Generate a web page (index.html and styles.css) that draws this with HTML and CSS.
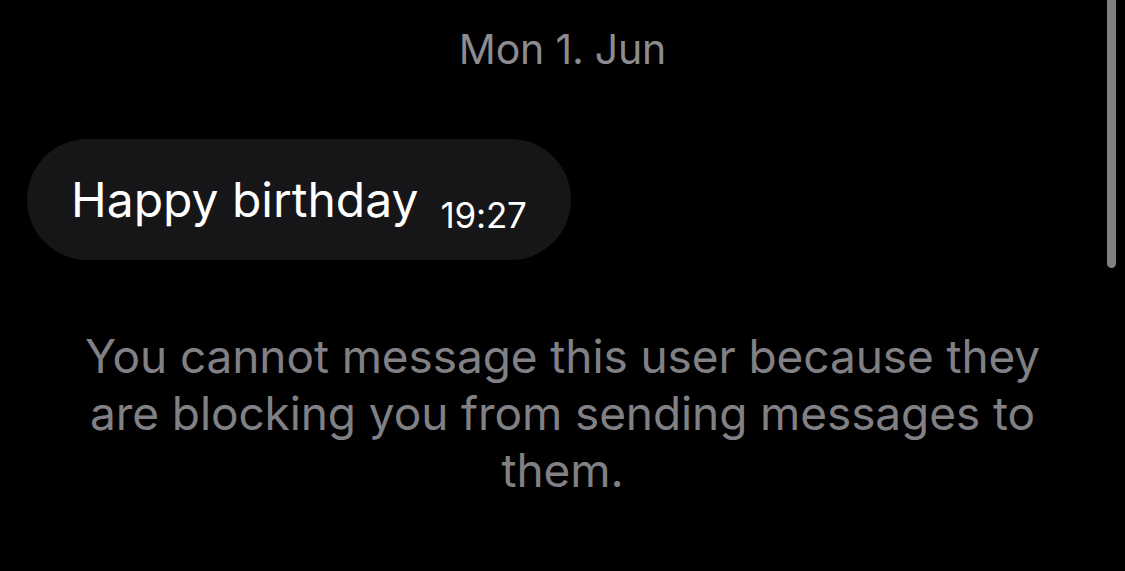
FILE: index.html
```html
<!DOCTYPE html>
<html lang="en">
<head>
  <meta charset="UTF-8">
  <meta name="viewport" content="width=device-width, initial-scale=1.0">
  <title>Chat</title>
  <link rel="stylesheet" href="styles.css">
</head>
<body>

  <div class="chat">
    <div class="date">Mon 1. Jun</div>

    <div class="row">
      <div class="bubble">
        <span class="text">Happy birthday</span>
        <span class="time">19:27</span>
      </div>
    </div>

    <p class="notice">You cannot message this user because they are blocking you from sending messages to them.</p>
  </div>

  <div class="scrollbar"></div>

</body>
</html>
```

FILE: styles.css
```css
body {
  background-color: #000;
  font-family: Inter, "Noto Sans", sans-serif;
  margin: 0;
  height: 571px;
  overflow: hidden;
}
.chat {
  display: flex;
  flex-direction: column;
  padding-top: 26px;
}
.date {
  text-align: center;
  color: #8b8b90;
  font-size: 41px;
  line-height: 46px;
  letter-spacing: -0.2px;
}
.row {
  display: flex;
  padding-left: 27px;
  margin-top: 67px;
}
.bubble {
  background-color: #161618;
  border-radius: 61px;
  height: 121px;
  padding: 34px 44px 0 44px;
  display: flex;
  align-items: baseline;
  gap: 22px;
  box-sizing: border-box;
}
.text {
  color: #fff;
  font-size: 48px;
  line-height: 54px;
  letter-spacing: 0;
}
.time {
  color: #fff;
  font-size: 35px;
  line-height: 40px;
  letter-spacing: -0.2px;
  position: relative;
  top: 11px;
}
.notice {
  color: #808085;
  font-size: 46px;
  line-height: 57px;
  text-align: center;
  margin: 68px 80px 0;
  letter-spacing: -0.1px;
}
.scrollbar {
  position: absolute;
  top: 0;
  right: 9px;
  width: 9px;
  height: 268px;
  background-color: #808080;
  border-radius: 0 0 5px 5px;
}
```
